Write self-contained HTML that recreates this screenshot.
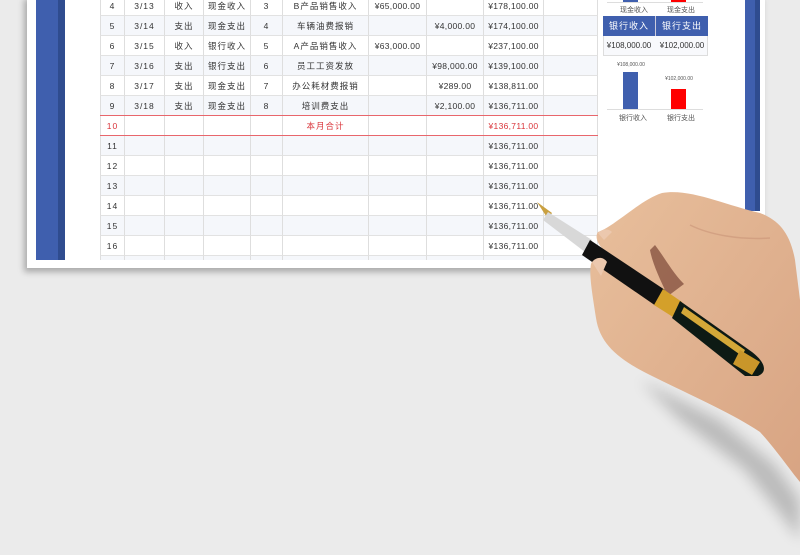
<!DOCTYPE html>
<html><head><meta charset="utf-8"><style>
*{margin:0;padding:0;box-sizing:border-box}
body{width:800px;height:555px;overflow:hidden;background:#ebebeb;position:relative;font-family:"Liberation Sans","Noto Sans CJK SC",sans-serif;font-size:8px;color:#333}
.a{position:absolute}
.paper{left:27px;top:-5px;width:738px;height:273px;background:#fff;box-shadow:-3px 4px 6px rgba(0,0,0,.28)}
.c{position:absolute;height:20px;line-height:20px;text-align:center;white-space:nowrap;overflow:hidden;border-right:1px solid #dedede;border-bottom:1px solid #e2e2e2;letter-spacing:1px;font-size:8.5px}
.n{letter-spacing:.3px}
.red{color:#d9343a}
</style></head><body>
<div class="a paper"></div>
<div class="a" style="left:36px;top:0;width:22px;height:260px;background:#3f5fae"></div>
<div class="a" style="left:58px;top:0;width:7px;height:260px;background:#2f4c8f"></div>
<div class="a" style="left:745px;top:0;width:10px;height:211px;background:#3f5fae"></div>
<div class="a" style="left:755px;top:0;width:5px;height:211px;background:#2f4c8f"></div>
<div id="tbl" class="a" style="left:0;top:0;width:800px;height:260px;overflow:hidden"></div>
<div class="a" style="left:100px;top:115px;width:498px;height:1px;background:#e8666c"></div>
<div class="a" style="left:100px;top:135px;width:498px;height:1px;background:#e8666c"></div>
<div class="a" style="left:623px;top:0;width:15px;height:2px;background:#3f5fae"></div>
<div class="a" style="left:671px;top:0;width:15px;height:2px;background:#f00"></div>
<div class="a" style="left:607px;top:2px;width:96px;height:1px;background:#ddd"></div>
<div class="a" style="left:620px;top:5px;font-size:7px;color:#555">现金收入</div>
<div class="a" style="left:667px;top:5px;font-size:7px;color:#555">现金支出</div>
<div class="a" style="left:603px;top:16px;width:105px;height:20px;background:#3f5fae"></div>
<div class="a" style="left:655px;top:16px;width:1px;height:40px;background:#ccd"></div>
<div class="a" style="left:603px;top:16px;width:52px;height:20px;line-height:20px;text-align:center;color:#fff;font-size:9px;letter-spacing:1px">银行收入</div>
<div class="a" style="left:656px;top:16px;width:52px;height:20px;line-height:20px;text-align:center;color:#fff;font-size:9px;letter-spacing:1px">银行支出</div>
<div class="a" style="left:603px;top:36px;width:105px;height:20px;border:1px solid #ddd;border-top:none;background:#f8f9fc"></div>
<div class="a" style="left:603px;top:36px;width:52px;height:20px;line-height:20px;text-align:center;font-size:8px">¥108,000.00</div>
<div class="a" style="left:656px;top:36px;width:52px;height:20px;line-height:20px;text-align:center;font-size:8px">¥102,000.00</div>
<div class="a" style="left:611px;top:62px;width:40px;text-align:center;font-size:5px;color:#555">¥108,000.00</div>
<div class="a" style="left:659px;top:76px;width:40px;text-align:center;font-size:5px;color:#555">¥102,000.00</div>
<div class="a" style="left:623px;top:72px;width:15px;height:37px;background:#3f5fae"></div>
<div class="a" style="left:671px;top:89px;width:15px;height:20px;background:#f00"></div>
<div class="a" style="left:607px;top:109px;width:96px;height:1px;background:#ddd"></div>
<div class="a" style="left:619px;top:113px;font-size:7px;color:#555">银行收入</div>
<div class="a" style="left:667px;top:113px;font-size:7px;color:#555">银行支出</div>
<svg class="a" style="left:0;top:0" width="800" height="555" viewBox="0 0 800 555">
<defs>
<linearGradient id="sk" x1="0" y1="0" x2="1" y2="1"><stop offset="0" stop-color="#e8bf9c"/><stop offset="1" stop-color="#d8a483"/></linearGradient>
<filter id="bl"><feGaussianBlur stdDeviation="7"/></filter>
</defs>
<path d="M640 380 L720 420 L775 465 L800 500 L800 540 L785 520 L745 470 L680 420 Z" fill="#000" opacity=".2" filter="url(#bl)"/>
<path d="M598 232 C615 226 640 200 662 193 C690 188 725 205 760 213 C778 220 790 232 795 260 L800 300 L800 482 C790 470 778 452 760 432 C730 412 690 395 650 375 C620 360 600 345 596 318 C592 292 589 275 591 264 C594 256 600 252 602 248 C597 243 595 236 598 232 Z" fill="url(#sk)"/>
<path d="M655 245 C665 258 672 272 684 284 L668 296 C660 280 652 262 650 250 Z" fill="#7a4636" opacity=".7"/>
<path d="M690 225 C710 235 740 240 770 238" stroke="#c99478" stroke-width="1.5" fill="none" opacity=".6"/>
<path d="M537 202 L552 213 L548 219 Z" fill="#c9a040"/>
<path d="M548 212 L592 240 L585 252 L543 220 Z" fill="#d8d8d8"/>
<path d="M590 240 L665 290 L656 306 L582 255 Z" fill="#111"/>
<path d="M663 289 L682 302 L673 317 L654 305 Z" fill="#d4a02a"/>
<path d="M680 301 L752 352 C765 362 768 372 758 376 L745 376 L672 318 Z" fill="#0d1a14"/>
<path d="M684 307 L745 350 L742 356 L681 313 Z" fill="#d4a838"/>
<path d="M740 350 L760 362 L752 375 L733 364 Z" fill="#c9962a"/>
<path d="M592 262 C596 257 603 256 607 262 L601 276 Z" fill="#ecc8ae"/>
<path d="M598 233 C602 229 608 228 612 232 L604 240 Z" fill="#ecc8ae"/>
</svg>
<script>
var cols=[100,125,165,204,251,283,369,427,484,544,598];
var data=[
["4","3/13","收入","现金收入","3","B产品销售收入","¥65,000.00","","¥178,100.00",""],
["5","3/14","支出","现金支出","4","车辆油费报销","","¥4,000.00","¥174,100.00",""],
["6","3/15","收入","银行收入","5","A产品销售收入","¥63,000.00","","¥237,100.00",""],
["7","3/16","支出","银行支出","6","员工工资发放","","¥98,000.00","¥139,100.00",""],
["8","3/17","支出","现金支出","7","办公耗材费报销","","¥289.00","¥138,811.00",""],
["9","3/18","支出","现金支出","8","培训费支出","","¥2,100.00","¥136,711.00",""],
["10","","","","","本月合计","","","¥136,711.00",""]];
for(var i=11;i<=17;i++)data.push([""+i,"","","","","","","","¥136,711.00",""]);
var h="";
data.forEach(function(r,ri){var top=-4+ri*20;var bg=ri%2?"#f5f7fb":"#fff";var red=r[0]=="10";
for(var c=0;c<10;c++){var cls="c"+(c>=6?" n":"")+(red&&(c==0||c==5||c==8)?" red":"");h+='<div class="'+cls+'" style="left:'+cols[c]+'px;top:'+top+'px;width:'+(cols[c+1]-cols[c])+'px;background:'+bg+(c==0?';border-left:1px solid #dedede':'')+'">'+r[c]+'</div>';}});
document.getElementById("tbl").innerHTML=h;
</script>
</body></html>
